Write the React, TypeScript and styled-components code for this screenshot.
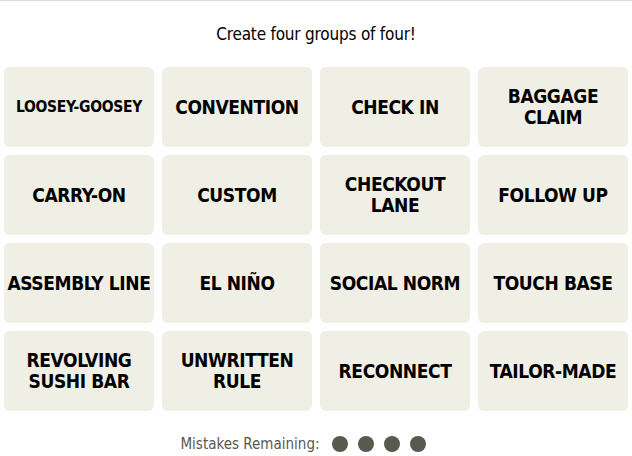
import React from "react";
import styled, { createGlobalStyle } from "styled-components";

const GlobalStyle = createGlobalStyle`
  html, body {
    margin: 0;
    padding: 0;
    background: #ffffff;
  }
  body {
    font-family: "DejaVu Sans Condensed", "Liberation Sans", sans-serif;
  }
`;

const Page = styled.div`
  width: 632px;
  height: 456px;
  box-sizing: border-box;
  border-top: 1px solid #dcdcdc;
  display: flex;
  flex-direction: column;
  align-items: center;
`;

const Title = styled.p`
  margin: 22px 0 0;
  height: 22px;
  font-size: 17px;
  line-height: 22px;
  letter-spacing: -0.2px;
  color: #000;
`;

const Board = styled.div`
  margin-top: 22px;
  display: grid;
  grid-template-columns: repeat(4, 150px);
  grid-auto-rows: 80px;
  gap: 8px;
`;

const Tile = styled.button<{ $small?: boolean }>`
  border: none;
  border-radius: 6px;
  background: #efefe6;
  color: #000;
  padding: 0;
  display: flex;
  align-items: center;
  justify-content: center;
  text-align: center;
  white-space: nowrap;
  font-family: inherit;
  font-weight: 700;
  text-transform: uppercase;
  font-size: ${(p) => (p.$small ? "15.5px" : "19px")};
  letter-spacing: ${(p) => (p.$small ? "-0.3px" : "-0.4px")};
  line-height: 21px;
  cursor: pointer;
`;

const Footer = styled.div`
  margin-top: 24px;
  padding-right: 26px;
  display: flex;
  align-items: center;
  gap: 12px;
  font-size: 15px;
  color: #5a594e;
`;

const Dots = styled.div`
  display: flex;
  gap: 10px;
`;

const Dot = styled.span`
  width: 16px;
  height: 16px;
  border-radius: 50%;
  background: #5a594e;
`;

const words: { label: React.ReactNode; small?: boolean }[] = [
  { label: "Loosey-Goosey", small: true },
  { label: "Convention" },
  { label: "Check In" },
  { label: <>Baggage<br />Claim</> },
  { label: "Carry-On" },
  { label: "Custom" },
  { label: <>Checkout<br />Lane</> },
  { label: "Follow Up" },
  { label: "Assembly Line" },
  { label: "El Niño" },
  { label: "Social Norm" },
  { label: "Touch Base" },
  { label: <>Revolving<br />Sushi Bar</> },
  { label: <>Unwritten<br />Rule</> },
  { label: "Reconnect" },
  { label: "Tailor-Made" },
];

export default function App() {
  return (
    <>
      <GlobalStyle />
      <Page>
        <Title>Create four groups of four!</Title>
        <Board>
          {words.map((w, i) => (
            <Tile key={i} $small={w.small}>
              {w.label}
            </Tile>
          ))}
        </Board>
        <Footer>
          Mistakes Remaining:
          <Dots>
            <Dot />
            <Dot />
            <Dot />
            <Dot />
          </Dots>
        </Footer>
      </Page>
    </>
  );
}
